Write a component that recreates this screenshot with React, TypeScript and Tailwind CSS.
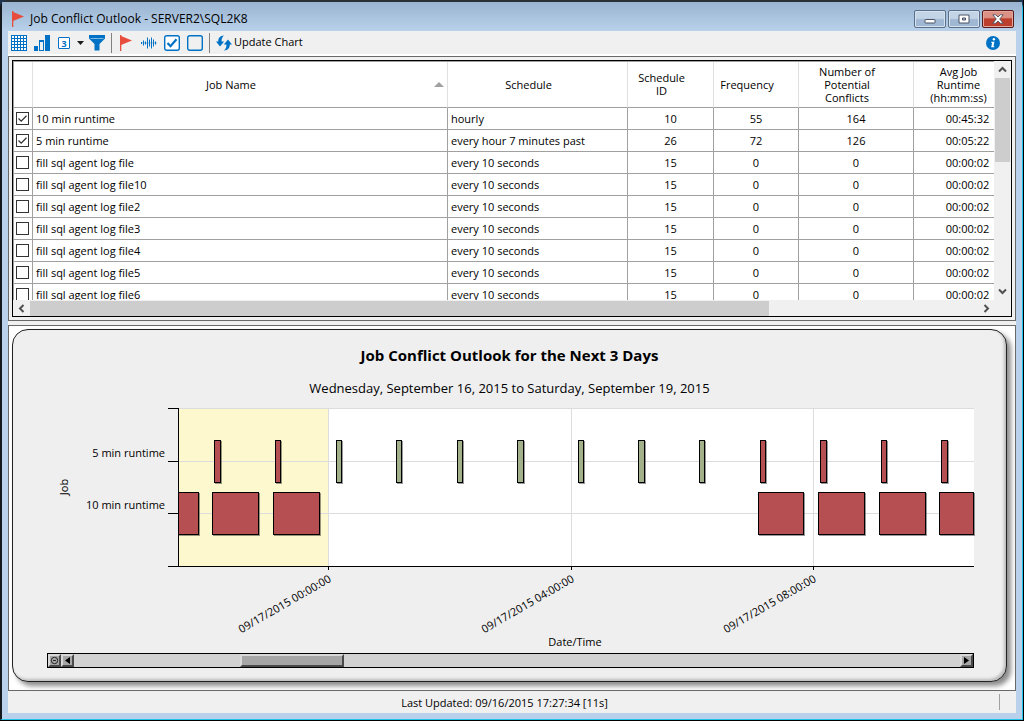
import { useState } from 'react'
import type { ReactNode } from 'react'
import { clsx } from 'clsx'

type Job = {
  name: string
  schedule: string
  id: number
  frequency: number
  conflicts: number
  runtime: string
}

const idle = (name: string): Job => ({
  name,
  schedule: 'every 10 seconds',
  id: 15,
  frequency: 0,
  conflicts: 0,
  runtime: '00:00:02',
})

const jobs: Job[] = [
  { name: '10 min runtime', schedule: 'hourly', id: 10, frequency: 55, conflicts: 164, runtime: '00:45:32' },
  { name: '5 min runtime', schedule: 'every hour 7 minutes past', id: 26, frequency: 72, conflicts: 126, runtime: '00:05:22' },
  idle('fill sql agent log file'),
  idle('fill sql agent log file10'),
  idle('fill sql agent log file2'),
  idle('fill sql agent log file3'),
  idle('fill sql agent log file4'),
  idle('fill sql agent log file5'),
  idle('fill sql agent log file6'),
]

const RED = '#b54f52'
const GREEN = '#a3b18a'

// [x, width, fill] in chart units
const shortRuns: [number, number, string][] = [
  [201, 7, RED],
  [262, 6, RED],
  [323, 6, GREEN],
  [383, 6, GREEN],
  [444, 6, GREEN],
  [504, 7, GREEN],
  [565, 6, GREEN],
  [625, 7, GREEN],
  [686, 6, GREEN],
  [747, 6, RED],
  [807, 7, RED],
  [868, 6, RED],
  [928, 7, RED],
]

const longRuns: [number, number, string][] = [
  [165, 21, RED],
  [199, 47, RED],
  [260, 47, RED],
  [745, 46, RED],
  [805, 47, RED],
  [866, 47, RED],
  [926, 35, RED],
]

const timeTicks = [
  { x: 315, label: '09/17/2015 00:00:00' },
  { x: 558, label: '09/17/2015 04:00:00' },
  { x: 800, label: '09/17/2015 08:00:00' },
]

function Flag() {
  return (
    <svg width="16" height="16" viewBox="0 0 16 16" fill="#e74c3c">
      <path d="M2 0h1.3v16H2z" />
      <path d="M3 1l11 4.5L3 10z" />
    </svg>
  )
}

function ToolButton({ label, className, children }: { label: string; className?: string; children: ReactNode }) {
  return (
    <button type="button" aria-label={label} className={clsx('shrink-0', className)}>
      {children}
    </button>
  )
}

function Separator() {
  return <div className="-mx-px h-5 w-px shrink-0 bg-[#808080]" />
}

function TitleBar() {
  const base = 'flex h-[18px] w-8 items-center justify-center rounded-[2px] border'
  const plain = 'border-[#5c6f88] bg-linear-to-b from-[#c3d4e7] from-45% to-[#9fb7d3] to-55% shadow-[inset_0_0_0_1px_#d5e2f0]'
  return (
    <header className="flex h-[29px] shrink-0 items-center bg-linear-to-b from-[#99b4d1] to-[#b9d1ea] pl-2 pr-2 pt-1">
      <Flag />
      <h1 className="ml-1 flex-1 text-xs">Job Conflict Outlook - SERVER2\SQL2K8</h1>
      <div className="flex gap-[2px]">
        <button type="button" aria-label="Minimize" className={clsx(base, plain)}>
          <svg width="12" height="10" viewBox="0 0 12 10">
            <rect x="1" y="5.5" width="10" height="3.5" rx="0.5" fill="#fff" stroke="#4b5364" />
          </svg>
        </button>
        <button type="button" aria-label="Maximize" className={clsx(base, plain)}>
          <svg width="12" height="10" viewBox="0 0 12 10">
            <path d="M1 1h10v8H1zM4.5 4h3v2h-3z" fill="#fff" fillRule="evenodd" stroke="#4b5364" />
          </svg>
        </button>
        <button
          type="button"
          aria-label="Close"
          className={clsx(base, 'border-[#5a1a1a] bg-linear-to-b from-[#dc9186] from-40% to-[#bb3f2c] to-50% shadow-[inset_0_0_0_1px_#e2a89e]')}
        >
          <svg width="12" height="10" viewBox="0 0 12 10">
            <path
              d="M.8.8h3L6 3 8.2.8h3L7.7 5l3.5 4.2h-3L6 7 3.8 9.2h-3L4.3 5z"
              fill="#fff"
              stroke="#4b5364"
              strokeWidth="0.9"
            />
          </svg>
        </button>
      </div>
    </header>
  )
}

function Toolbar() {
  return (
    <div className="flex h-[25px] shrink-0 items-center gap-[7px] border-b-2 border-white pl-[3px] pr-4">
      <ToolButton label="Grid">
        <svg width="16" height="16" viewBox="0 0 16 16" stroke="#0072c6" fill="none" shapeRendering="crispEdges">
          <rect x="0.5" y="0.5" width="15" height="15" fill="#fff" />
          <path d="M3.5 0v16M6.5 0v16M9.5 0v16M12.5 0v16M0 3.5h16M0 6.5h16M0 9.5h16M0 12.5h16" />
        </svg>
      </ToolButton>
      <ToolButton label="Chart">
        <svg width="16" height="16" viewBox="0 0 16 16" fill="#0072c6" shapeRendering="crispEdges">
          <path d="M0 11h4v5H0zM11 0h5v16h-5z" />
          <path d="M5 5h5v11H5zM6 7v8h3V7z" fillRule="evenodd" />
        </svg>
      </ToolButton>
      <ToolButton label="Days to show" className="w-[25px]">
        <svg width="28" height="16" viewBox="0 0 28 16" className="max-w-none">
          <rect x="1.5" y="2.5" width="11" height="11" rx="0.5" fill="#fff" stroke="#0072c6" />
          <text x="7" y="11.5" textAnchor="middle" fontSize="9" fontWeight="700" fill="#0072c6">
            3
          </text>
          <path d="M20 6h7l-3.5 4z" fill="#1b1b1b" />
        </svg>
      </ToolButton>
      <ToolButton label="Filter">
        <svg width="16" height="16" viewBox="0 0 16 16" fill="#0072c6">
          <path d="M0 0h16v3.5L10.5 9v6.500h-5V9L0 3.5z" />
          <path d="M1.5 3.5h13" stroke="#7fb8e2" />
        </svg>
      </ToolButton>
      <Separator />
      <ToolButton label="Flag">
        <Flag />
      </ToolButton>
      <ToolButton label="Activity">
        <svg width="16" height="16" viewBox="0 0 16 16" stroke="#0072c6">
          <path d="M.5 7v2M2.5 5.500v5M4.5 6.500v3M6.500 2.500v11M8.500 4.500v7M10.500 2.500v11M12.500 4.500v7M14.500 6.500v3" />
          <path d="M0 8h16" opacity="0.4" />
        </svg>
      </ToolButton>
      <ToolButton label="Check all">
        <svg width="16" height="16" viewBox="0 0 16 16" stroke="#0072c6" fill="none">
          <rect x="0.7" y="0.7" width="14.6" height="14.6" rx="2" fill="#fff" strokeWidth="1.4" />
          <path d="M3.5 8l3 3.2 6-7" strokeWidth="2.2" />
        </svg>
      </ToolButton>
      <ToolButton label="Uncheck all">
        <svg width="16" height="16" viewBox="0 0 16 16" stroke="#0072c6" fill="none">
          <rect x="0.7" y="0.7" width="14.6" height="14.6" rx="2" strokeWidth="1.4" />
        </svg>
      </ToolButton>
      <Separator />
      <button type="button" className="flex items-center gap-[2px] text-[11px]">
        <svg width="16" height="16" viewBox="0 0 16 16" fill="#0072c6">
          <path d="M8 .5C4.200.8 2.200 2.800 2.200 6.500H0L4 11.500l4.200-5H5.600C5.400 4 6.200 2 8 .5z" />
          <path d="M8 15.500c3.800-.3 5.800-2.300 5.800-6H16l-4-5-4.200 5h2.600c.2 2.500-.6 4.500-2.400 6z" />
        </svg>
        Update Chart
      </button>
      <ToolButton label="Information" className="ml-auto">
        <svg width="14" height="14" viewBox="0 0 14 14">
          <circle cx="7" cy="7" r="7" fill="#0072c6" />
          <circle cx="7.9" cy="3.3" r="1.2" fill="#fff" />
          <path d="M5.2 5.700h3.200L7.500 10.200h.9l-.2 1H5.200l.9-4.500h-1z" fill="#fff" />
        </svg>
      </ToolButton>
    </div>
  )
}

function Arrow({ d }: { d: string }) {
  return (
    <svg width="9" height="9" viewBox="0 0 9 9" fill="none" stroke="#505050" strokeWidth="2">
      <path d={d} />
    </svg>
  )
}

function JobGrid() {
  const [checked, setChecked] = useState<boolean[]>(jobs.map((_, i) => i < 2))

  const toggle = (row: number) => setChecked((c) => c.map((v, i) => (i === row ? !v : v)))

  const th = 'border-r border-b border-r-[#e0e0e0] border-b-[#a0a0a0] p-0 pr-[18px] font-normal'
  const td = 'border-r border-b border-[#a0a0a0] p-0'

  return (
    <section className="shrink-0 border border-[#696969] p-[3px]">
      <div className="flex h-[257px] flex-col border border-black bg-white">
        <div className="flex min-h-0 flex-1">
          <div className="min-w-0 flex-1 overflow-hidden border-l border-t border-[#a0a0a0]">
            <table className="w-[calc(100%+28px)] table-fixed border-separate border-spacing-0 text-[11px] leading-[13px]">
              <colgroup>
                <col className="w-[19px]" />
                <col />
                <col className="w-[180px]" />
                <col className="w-[86px]" />
                <col className="w-[85px]" />
                <col className="w-[115px]" />
                <col className="w-[108px]" />
              </colgroup>
              <thead>
                <tr className="h-[46px]">
                  <th className={th} aria-label="Selected" />
                  <th className={clsx(th, 'relative')}>
                    Job Name
                    <svg className="absolute right-[3px] top-5" width="10" height="5" viewBox="0 0 10 5">
                      <path d="M5 0l5 5H0z" fill="#a0a0a0" />
                    </svg>
                  </th>
                  <th className={th}>Schedule</th>
                  <th className={clsx(th, 'align-top pt-[9px]')}>
                    Schedule
                    <br />
                    ID
                  </th>
                  <th className={th}>Frequency</th>
                  <th className={th}>
                    Number of
                    <br />
                    Potential
                    <br />
                    Conflicts
                  </th>
                  <th className={th}>
                    Avg Job
                    <br />
                    Runtime
                    <br />
                    (hh:mm:ss)
                  </th>
                </tr>
              </thead>
              <tbody>
                {jobs.map((job, i) => (
                  <tr key={job.name} className="h-[22px] text-center">
                    <td className={td}>
                      <span className="relative ml-[2px] block size-[13px]">
                        <input
                          type="checkbox"
                          aria-label={job.name}
                          checked={checked[i]}
                          onChange={() => toggle(i)}
                          className="block size-[13px] appearance-none border border-[#333] bg-white"
                        />
                        {checked[i] && (
                          <svg className="pointer-events-none absolute inset-0" width="13" height="13" viewBox="0 0 13 13">
                            <path d="M2.5 6.5l2.7 2.7 5.3-5.4" fill="none" stroke="#333" strokeWidth="1.3" />
                          </svg>
                        )}
                      </span>
                    </td>
                    <td className={clsx(td, 'pl-[3px] text-left')}>{job.name}</td>
                    <td className={clsx(td, 'pl-[3px] text-left')}>{job.schedule}</td>
                    <td className={td}>{job.id}</td>
                    <td className={td}>{job.frequency}</td>
                    <td className={td}>{job.conflicts}</td>
                    <td className={td}>{job.runtime}</td>
                  </tr>
                ))}
              </tbody>
            </table>
          </div>
          <div className="flex w-[17px] flex-col items-center bg-[#f0f0f0]">
            <button type="button" aria-label="Scroll up" className="flex h-[17px] items-center">
              <Arrow d="M1 6.5L4.5 3 8 6.5" />
            </button>
            <div className="h-[84px] w-[15px] bg-[#cdcdcd]" />
            <button type="button" aria-label="Scroll down" className="mt-auto flex h-[17px] items-center">
              <Arrow d="M1 2.5L4.5 6 8 2.5" />
            </button>
          </div>
        </div>
        <div className="flex h-4 items-center bg-[#f0f0f0] pr-4">
          <button type="button" aria-label="Scroll left" className="flex w-[17px] justify-center">
            <Arrow d="M6.5 1L3 4.5 6.5 8" />
          </button>
          <div className="flex h-[15px] flex-1">
            <div className="w-[78%] bg-[#cdcdcd]" />
          </div>
          <button type="button" aria-label="Scroll right" className="flex w-[17px] justify-center">
            <Arrow d="M2.5 1L6 4.5 2.5 8" />
          </button>
        </div>
      </div>
    </section>
  )
}

function Runs({ runs, y }: { runs: [number, number, string][]; y: number }) {
  return (
    <>
      {runs.map(([x, width, fill]) => (
        <g key={x}>
          <rect x={x + 1} y={y + 1} width={width} height="43" fill="#000" opacity="0.4" />
          <rect x={x} y={y} width={width} height="43" fill="#000" />
          <rect x={x + 1} y={y + 1} width={width - 2} height="41" fill={fill} />
        </g>
      ))}
    </>
  )
}

function Timeline() {
  return (
    <svg className="block h-auto w-full" viewBox="0 0 993 253" role="img" aria-label="Job runs over time">
      <g shapeRendering="crispEdges">
        <rect x="166" y="8" width="795" height="158" fill="#fff" />
        <rect x="166" y="8" width="149" height="158" fill="#fef8ce" />
        <path d="M166 8.5h795M166 61.5h795M166 113.5h795M315.5 8v158M558.5 8v158M800.5 8v158" stroke="#dcdcdc" />
        <Runs runs={shortRuns} y={40} />
        <Runs runs={longRuns} y={92} />
        <path
          d="M165.5 8v159M155 8.5h11M155 61.5h11M155 113.5h11M155 166.5h806M315.5 167v3M558.5 167v3M800.5 167v3"
          stroke="#000"
        />
      </g>
      <g fontSize="11">
        <text x="152" y="57" textAnchor="end">
          5 min runtime
        </text>
        <text x="152" y="109" textAnchor="end">
          10 min runtime
        </text>
        <text transform="translate(55 87) rotate(-90)" textAnchor="middle">
          Job
        </text>
        {timeTicks.map((t) => (
          <text key={t.x} transform={`translate(${t.x + 4} 181) rotate(-30)`} textAnchor="end">
            {t.label}
          </text>
        ))}
        <text x="562" y="246" textAnchor="middle">
          Date/Time
        </text>
      </g>
    </svg>
  )
}

function ChartScrollbar() {
  const raised = 'border-2 border-t-[#d8d8d8] border-l-[#d8d8d8] border-b-[#4a4a4a] border-r-[#4a4a4a] bg-[#a6a6a6]'
  const button = clsx('flex w-[13px] items-center justify-center', raised)
  return (
    <div className="ml-[34px] mr-8 flex h-[15px] border border-black bg-[#d2d2d2]">
      <button type="button" aria-label="Reset zoom" className={button}>
        <svg className="shrink-0" width="9" height="9" viewBox="0 0 9 9" fill="none" stroke="#222">
          <circle cx="4.5" cy="4.5" r="3.2" />
          <path d="M3 4.5h3" />
        </svg>
      </button>
      <button type="button" aria-label="Earlier" className={button}>
        <svg className="shrink-0" width="7" height="7" viewBox="0 0 7 7">
          <path d="M6 0v7L1 3.5z" />
        </svg>
      </button>
      <div className="flex flex-1">
        <div className="w-[18.7%]" />
        <div className={clsx('w-[11.8%]', raised)} />
      </div>
      <button type="button" aria-label="Later" className={button}>
        <svg className="shrink-0" width="7" height="7" viewBox="0 0 7 7">
          <path d="M1 0v7l5-3.5z" />
        </svg>
      </button>
    </div>
  )
}

function ChartPanel() {
  return (
    <section className="mt-1 flex flex-1 flex-col border border-[#696969] bg-white pt-[3px] pr-2 pb-2 pl-[3px]">
      <div className="flex-1 rounded-2xl border border-[#222] bg-[#efefef] pt-[15px] shadow-[4px_4px_5px_#8c8c8c,inset_-2px_-2px_3px_#bbb]">
        <h2 className="text-center text-[15px] leading-5 font-bold">Job Conflict Outlook for the Next 3 Days</h2>
        <p className="mt-[14px] mb-[3px] text-center text-[13px] leading-[18px]">
          Wednesday, September 16, 2015 to Saturday, September 19, 2015
        </p>
        <Timeline />
        <ChartScrollbar />
      </div>
    </section>
  )
}

export default function App() {
  return (
    <div className="flex min-h-screen flex-col border-r border-b border-black bg-[#1f3550] font-['Open_Sans','Noto_Sans',sans-serif] text-black">
      <div className="flex flex-1 flex-col rounded-t-lg border-t-2 border-r border-b border-l-2 border-t-[#2b2f36] border-r-[#1fc4e8] border-b-[#1fc4e8] border-l-[#15181c] bg-[#b9d1ea]">
        <TitleBar />
        <main className="mx-[6px] mb-[6px] flex flex-1 flex-col bg-[#f0f0f0]">
          <Toolbar />
          <JobGrid />
          <ChartPanel />
          <footer className="flex h-[22px] shrink-0 items-center pr-4 text-[11px]">
            <p className="flex-1 pt-[2px] pl-[2px] text-center">Last Updated: 09/16/2015 17:27:34 [11s]</p>
            <div className="h-4 w-px bg-[#a0a0a0]" />
          </footer>
        </main>
      </div>
    </div>
  )
}
